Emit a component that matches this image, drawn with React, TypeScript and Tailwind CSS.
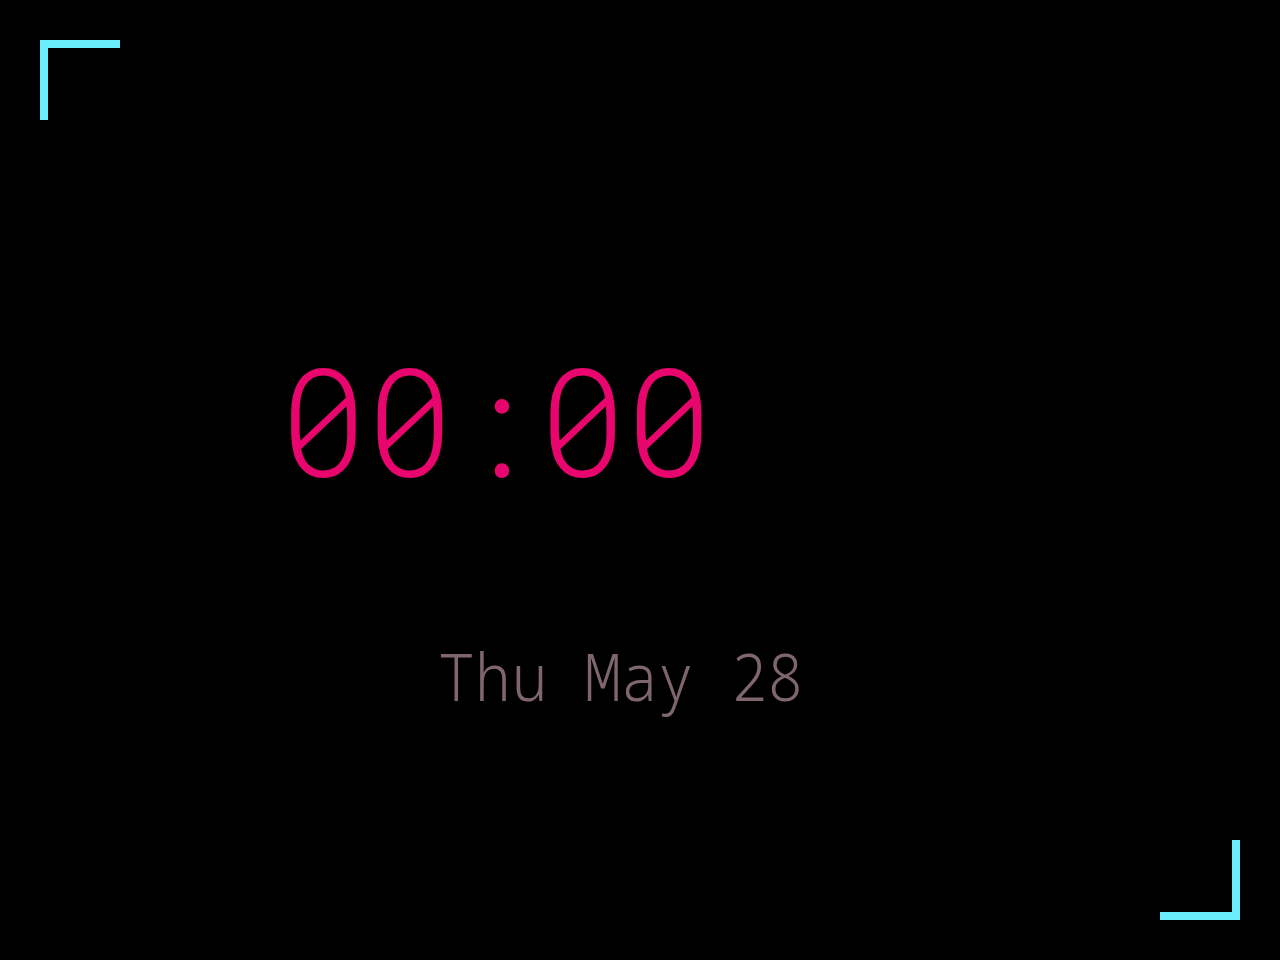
export default function App() {
  return (
    <div className="relative w-[1280px] h-[960px] bg-black overflow-hidden" style={{ fontFamily: '"Roboto Mono", "DejaVu Sans Mono", monospace' }}>
      <div className="absolute left-[40px] top-[40px] w-[80px] h-[80px] border-l-[8px] border-t-[8px] border-[#6aeefb]" />
      <div className="absolute left-[1160px] top-[840px] w-[80px] h-[80px] border-r-[8px] border-b-[8px] border-[#6aeefb]" />
      <div className="flex flex-col pt-[344px]">
        <div className="pl-[280px] text-[144px] leading-none font-[350] slashed-zero text-[#e8066e] scale-y-[1.04] origin-top">00:00</div>
        <div className="pl-[438px] mt-[154px] text-[61px] leading-none font-light text-[#7e6570] scale-y-[1.1] origin-top" style={{ fontFamily: '"Noto Sans Mono", monospace' }}>Thu May 28</div>
      </div>
    </div>
  );
}
